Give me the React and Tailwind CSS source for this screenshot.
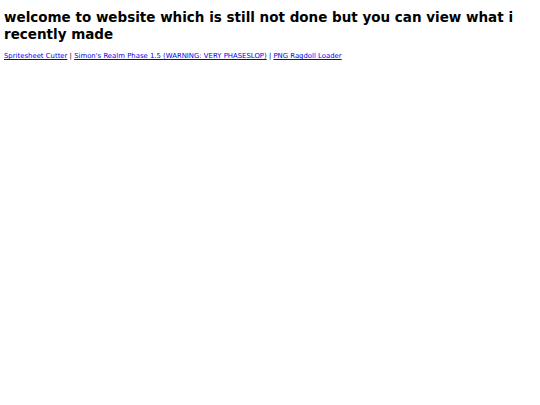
export default function App() {
  return (
    <div className="min-h-screen bg-white px-1 text-black" style={{ fontFamily: 'Verdana, "DejaVu Sans", sans-serif' }}>
      <h1 className="pt-[9px] text-[13.5px] font-bold leading-[17px]">
        welcome to website which is still not done but you can view what i recently made
      </h1>
      <p className="mt-[9px] text-[6.9px] leading-[9px]">
        <a href="#" className="text-[#0000ee] underline">Spritesheet Cutter</a>
        {' | '}
        <a href="#" className="text-[#0000ee] underline">Simon's Realm Phase 1.5 (WARNING: VERY PHASESLOP)</a>
        {' | '}
        <a href="#" className="text-[#0000ee] underline">PNG Ragdoll Loader</a>
      </p>
    </div>
  )
}
